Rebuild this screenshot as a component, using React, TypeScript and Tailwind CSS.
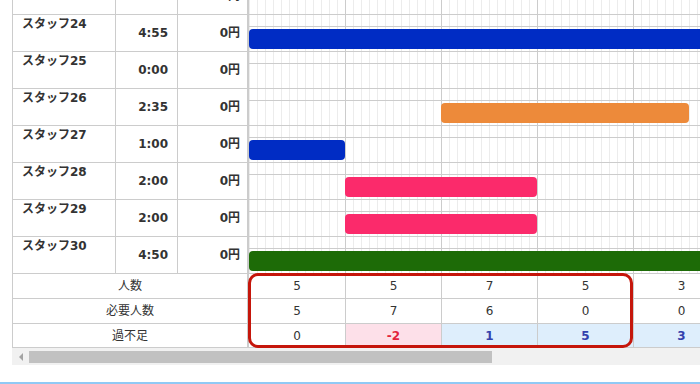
import React from 'react';

interface StaffRow {
  name: string;
  time: string;
  pay: string;
  start?: number;
  slots?: number;
  color?: string;
}

// one slot = 5 minutes = 8px
const SLOT = 8;

const staffRows: StaffRow[] = [
  { name: 'スタッフ23', time: '0:00', pay: '0円' },
  { name: 'スタッフ24', time: '4:55', pay: '0円', start: 0, slots: 59, color: '#002cc4' },
  { name: 'スタッフ25', time: '0:00', pay: '0円' },
  { name: 'スタッフ26', time: '2:35', pay: '0円', start: 24, slots: 31, color: '#ed8a3a' },
  { name: 'スタッフ27', time: '1:00', pay: '0円', start: 0, slots: 12, color: '#002cc4' },
  { name: 'スタッフ28', time: '2:00', pay: '0円', start: 12, slots: 24, color: '#fb2a6b' },
  { name: 'スタッフ29', time: '2:00', pay: '0円', start: 12, slots: 24, color: '#fb2a6b' },
  { name: 'スタッフ30', time: '4:50', pay: '0円', start: 0, slots: 58, color: '#1d6b07' },
];

const headcount = [5, 5, 7, 5, 3];
const required = [5, 7, 6, 0, 0];

const App: React.FC = () => {
  const diff = headcount.map((n, i) => n - required[i]);

  const diffCell = (v: number) => {
    if (v < 0) return 'bg-[#fde0e9] text-[#e3243c] font-bold';
    if (v > 0) return 'bg-[#deeefc] text-[#3441ad] font-bold';
    return 'bg-white';
  };

  return (
    <div className="w-[700px] h-[384px] bg-white overflow-hidden flex flex-col text-[12px] text-[#333] font-['DejaVu_Sans','Noto_Sans_CJK_JP',sans-serif]">
      <div className="relative h-[348px] ml-[12px] overflow-hidden border-l border-[#ccc] shrink-0">
        <div className="-mt-[23px]">
          {staffRows.map((row) => (
            <div key={row.name} className="flex h-[37px] border-t border-[#ccc]">
              <div className="w-[103px] shrink-0 border-r border-[#ccc] pl-[9px] font-bold leading-[18px]">
                {row.name}
              </div>
              <div className="w-[62px] shrink-0 border-r border-[#ccc] flex items-center justify-end pr-[9px] font-bold">
                {row.time}
              </div>
              <div className="w-[71px] shrink-0 border-r-2 border-[#ccc] flex items-center justify-end pr-[7px] font-bold">
                {row.pay}
              </div>
              <div className="flex-1 min-w-0 overflow-hidden flex flex-col [background-image:linear-gradient(90deg,transparent_96px,#ccc_96px_97px,transparent_97px_192px,#ccc_192px_193px,transparent_193px_288px,#ccc_288px_289px,transparent_289px_384px,#ccc_384px_385px,transparent_385px),repeating-linear-gradient(90deg,#ececec_0_1px,transparent_1px_8px)]">
                <div className="h-[12px] border-b border-[#ccc] shrink-0" />
                <div className="pt-[2px]">
                  {row.color && (
                    <div
                      className="h-[20px] rounded-[4px]"
                      style={{
                        marginLeft: (row.start ?? 0) * SLOT,
                        width: (row.slots ?? 0) * SLOT,
                        backgroundColor: row.color,
                      }}
                    />
                  )}
                </div>
              </div>
            </div>
          ))}

          <div className="flex h-[25px] border-t border-[#ccc]">
            <div className="w-[236px] shrink-0 border-r-2 border-[#ccc] flex items-center justify-center">人数</div>
            {headcount.map((v, i) => (
              <div key={i} className={`w-[96px] shrink-0 flex items-center justify-center ${i > 0 ? 'border-l border-[#ccc]' : ''}`}>
                {v}
              </div>
            ))}
          </div>
          <div className="flex h-[25px] border-t border-[#ccc]">
            <div className="w-[236px] shrink-0 border-r-2 border-[#ccc] flex items-center justify-center">必要人数</div>
            {required.map((v, i) => (
              <div key={i} className={`w-[96px] shrink-0 flex items-center justify-center ${i > 0 ? 'border-l border-[#ccc]' : ''}`}>
                {v}
              </div>
            ))}
          </div>
          <div className="flex h-[25px] border-t border-b border-[#ccc]">
            <div className="w-[236px] shrink-0 border-r-2 border-[#ccc] flex items-center justify-center">過不足</div>
            {diff.map((v, i) => (
              <div
                key={i}
                className={`w-[96px] shrink-0 flex items-center justify-center ${i > 0 ? 'border-l border-[#ccc]' : ''} ${diffCell(v)}`}
              >
                {v}
              </div>
            ))}
          </div>
        </div>

        {/* highlight around the first four columns of the summary */}
        <div className="absolute left-[235px] top-[273px] w-[385px] h-[75px] border-[3px] border-[#c5160b] rounded-[10px] pointer-events-none" />
      </div>

      <div className="ml-[12px] h-[17px] bg-[#f1f1f1] flex shrink-0">
        <div className="w-[17px] flex items-center justify-center">
          <svg width="4" height="8" viewBox="0 0 4 8">
            <path d="M4 0 L0 4 L4 8 Z" fill="#a3a3a3" />
          </svg>
        </div>
        <div className="w-[463px] h-[12px] mt-[3px] bg-[#c1c1c1]" />
      </div>

      <div className="flex-1" />
      <div className="h-[2px] bg-[#90c9f5] shrink-0" />
    </div>
  );
};

export default App;
